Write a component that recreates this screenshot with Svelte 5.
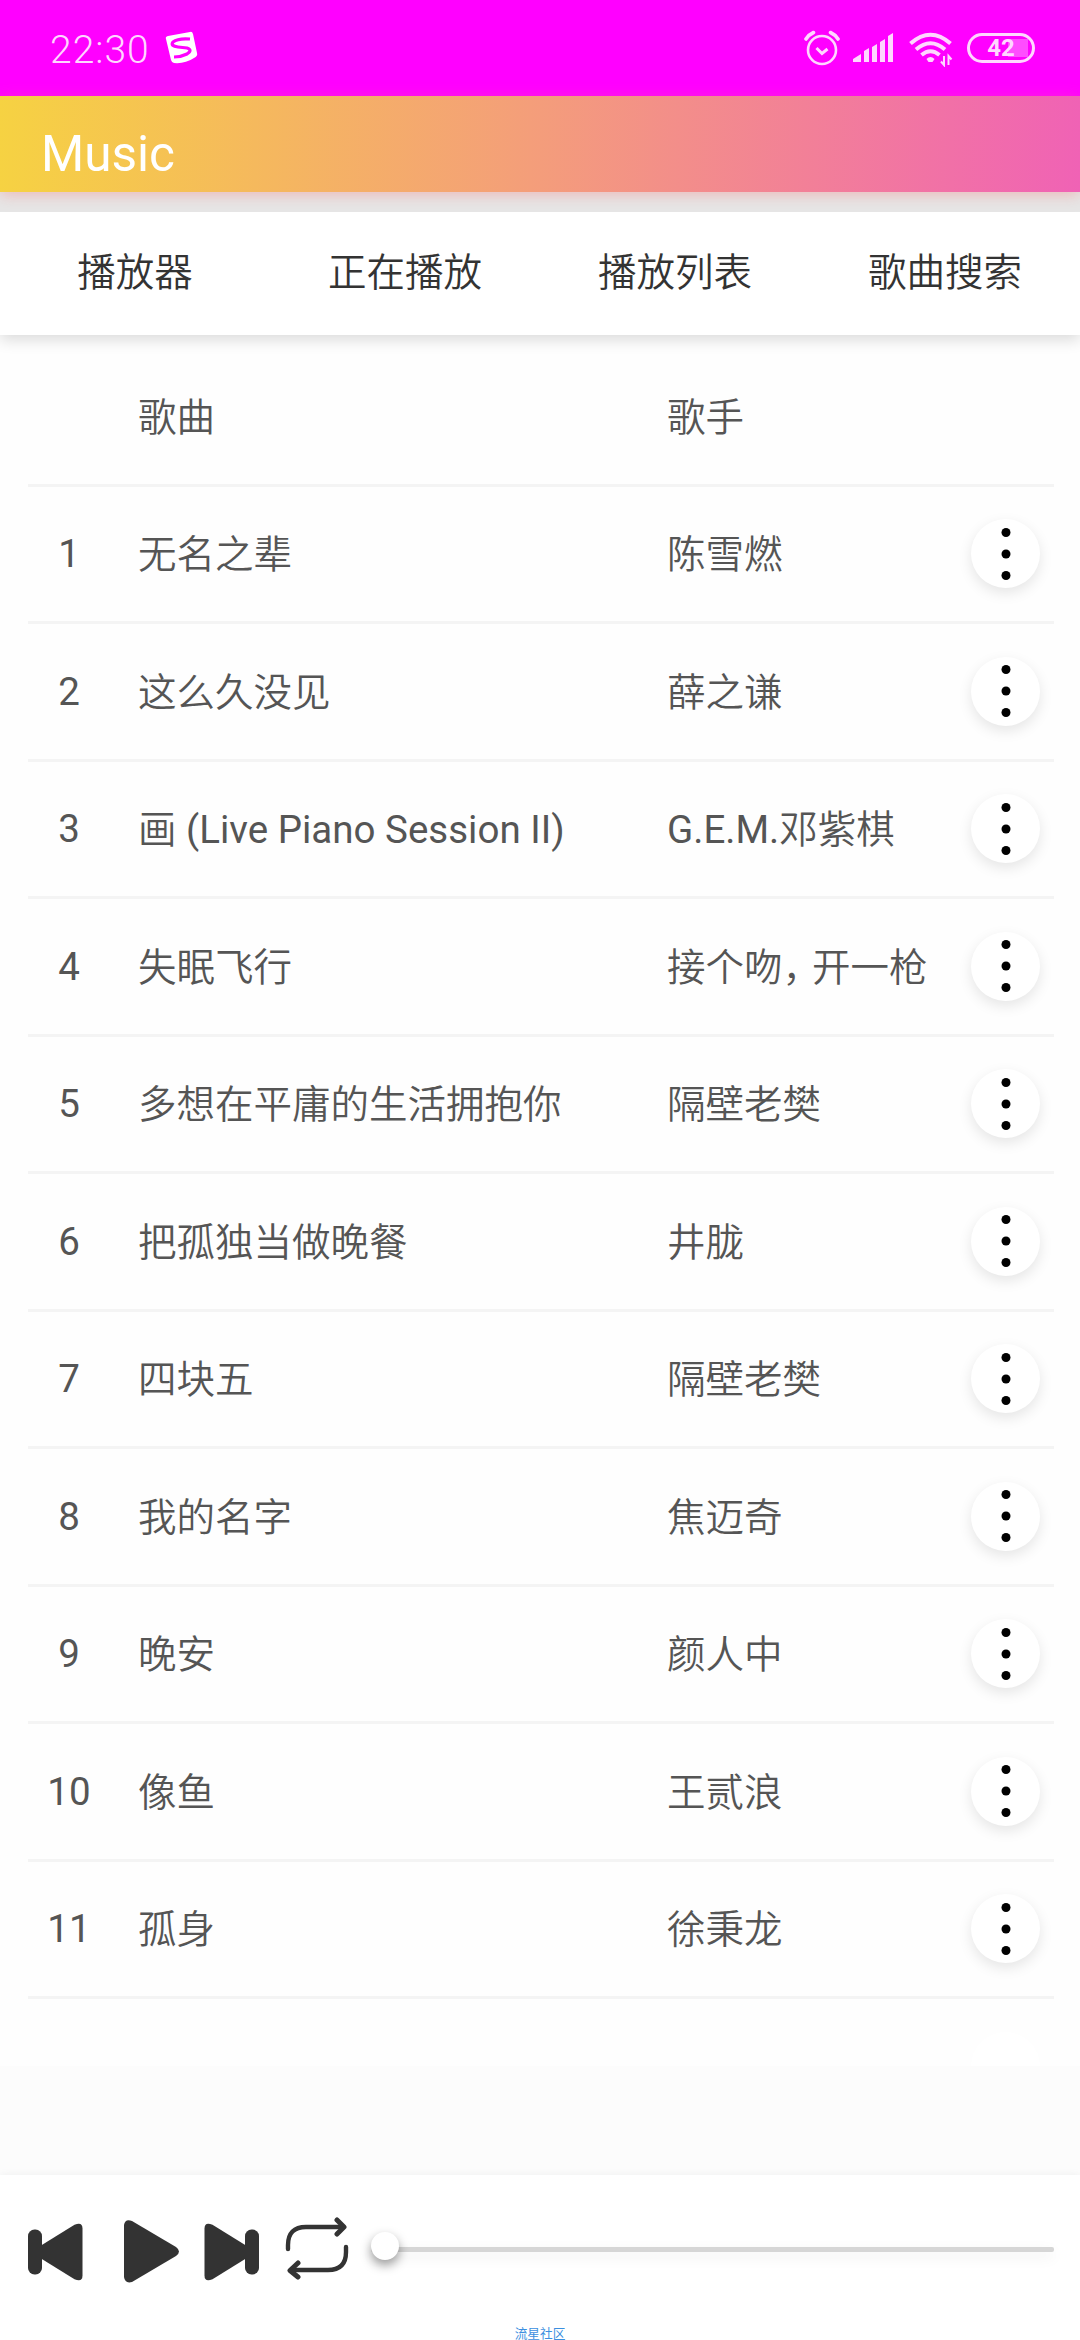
<script>
	const tabs = ['播放器', '正在播放', '播放列表', '歌曲搜索'];

	const songs = [
		{ name: '无名之辈', singer: '陈雪燃' },
		{ name: '这么久没见', singer: '薛之谦' },
		{ name: '画 (Live Piano Session II)', singer: 'G.E.M.邓紫棋' },
		{ name: '失眠飞行', singer: '接个吻，开一枪' },
		{ name: '多想在平庸的生活拥抱你', singer: '隔壁老樊' },
		{ name: '把孤独当做晚餐', singer: '井胧' },
		{ name: '四块五', singer: '隔壁老樊' },
		{ name: '我的名字', singer: '焦迈奇' },
		{ name: '晚安', singer: '颜人中' },
		{ name: '像鱼', singer: '王贰浪' },
		{ name: '孤身', singer: '徐秉龙' }
	];

	// latin runs keep the regular weight, the rest is set lighter
	const runs = (text) => text.match(/[\x20-\x7e]+|，|[^\x20-\x7e，]+/g);
</script>

{#snippet label(text)}
	{#each runs(text) as run}<span class:latin={/^[\x20-\x7e]/.test(run)} class:comma={run === '，'}>{run}</span>{/each}
{/snippet}

<div class="app">
	<div class="status">
		<span class="time">22:30</span>
		<svg class="ime" width="34" height="34" viewBox="0 0 34 34">
			<path d="M1 8Q0 6 3 5L25 1Q27 0 28 3L32 22Q33 25 29 27Q20 33 9 32Q7 32 6 29Z" fill="#fff" />
			<path
				d="M25 8Q13 7 8 11Q5 15 13 16L22 17Q28 19 22 23Q16 26 9 26"
				fill="none"
				stroke="#f0f"
				stroke-width="3.2"
			/>
		</svg>
		<div class="icons">
			<svg width="36" height="36" viewBox="0 0 36 36" fill="none" stroke="#ffd6ff" stroke-linecap="round">
				<circle cx="18" cy="20" r="14" stroke-width="2.6" />
				<path d="M12.5 18l5.5 5.5 5.5-4.5" stroke-width="3" stroke-linecap="butt" />
				<path d="M2 9Q5 4.5 9.5 2.5M26.5 2.5Q31 4.5 34 9" stroke-width="3.6" />
			</svg>
			<svg class="signal" width="40" height="30" viewBox="0 0 40 30" fill="#ffd6ff">
				<path d="M0 29v-3l8-5v8zM11 29V18l5-3v14zM19 29V14l5-3v18zM27 29V9l5-3v23zM35 29V3l5-3v29z" />
			</svg>
			<svg class="wifi" width="44" height="36" viewBox="0 0 44 36" fill="none" stroke="#ffd6ff" stroke-width="4">
				<path d="M1.5 12.5Q21.5-5 41.5 12.5M7 18.5Q21.5 6 36 18.5M12.5 24Q21.5 16.5 30.5 24" />
				<path d="M17.5 28Q21.5 24 25.5 28L23.5 31H19.5Z" fill="#ffd6ff" stroke="none" />
				<path d="M35 25v9l-3-3.5M39.5 34v-9l3 3.5" stroke-width="2" />
			</svg>
			<div class="battery">42</div>
		</div>
	</div>

	<header>Music</header>

	<nav>
		{#each tabs as tab}
			<a href="#{tab}">{tab}</a>
		{/each}
	</nav>

	<main>
		<div class="row head">
			<span class="num"></span>
			<span class="name">歌曲</span>
			<span class="singer">歌手</span>
		</div>
		{#each songs as song, i}
			<div class="row">
				<span class="num">{i + 1}</span>
				<span class="name">{@render label(song.name)}</span>
				<span class="singer">{@render label(song.singer)}</span>
				<button aria-label="more">
					<svg width="10" height="54" viewBox="0 0 10 54">
						<circle cx="5" cy="5.5" r="4.5" />
						<circle cx="5" cy="27" r="4.5" />
						<circle cx="5" cy="48.5" r="4.5" />
					</svg>
				</button>
			</div>
		{/each}
		<div class="row next">
			<button aria-label="more"></button>
		</div>
	</main>

	<footer>
		<div class="player">
			<svg class="prev" width="55" height="58" viewBox="0 0 55 58" fill="#333">
				<rect x="0" y="6.5" width="14" height="45" rx="6.5" />
				<path d="M13 22.5L46.5 1.8Q54.5-1.5 54.5 5.5V52.5Q54.5 59.5 46.5 56.2L13 35.5Z" />
			</svg>
			<svg class="play" width="55" height="63" viewBox="0 0 55 63" fill="#333">
				<path d="M0 5Q1-1.5 8 1L52 27Q58 31.5 52 36L8 62Q1 64 0 57Z" />
			</svg>
			<svg class="skip" width="55" height="58" viewBox="0 0 55 58" fill="#333">
				<rect x="41" y="6.5" width="14" height="45" rx="6.5" />
				<path d="M42 22.5L8.5 1.8Q.5-1.5.5 5.5V52.5Q.5 59.5 8.5 56.2L42 35.5Z" />
			</svg>
			<svg class="loop" width="64" height="64" viewBox="0 0 64 64" fill="none" stroke="#333" stroke-width="4.4" stroke-linecap="round">
				<path d="M3 32V28Q3 10 21 10H58M61 30V35Q61 53 43 53H6" />
				<path d="M52 3L59 10L52 17M13 46L5 53.5L13 60" stroke-width="5" stroke-linejoin="round" />
			</svg>
			<div class="slider"><i></i></div>
		</div>
		<div class="mark">流星社区</div>
	</footer>
</div>

<style>
	:global(body) {
		background: #fff;
	}

	.app {
		display: flex;
		flex-direction: column;
		width: 1080px;
		height: 2340px;
		overflow: hidden;
		background: #fcfcfc;
		color: #555;
		font-family: Roboto, 'Noto Sans CJK SC', sans-serif;
		font-size: 38.5px;
	}

	.status {
		display: flex;
		align-items: center;
		height: 96px;
		flex: none;
		box-sizing: border-box;
		padding: 0 45px 0 50px;
		background: #f0f;
		color: #ffd6ff;
	}

	.time {
		width: 115px;
		padding-top: 4px;
		font-weight: 350;
		font-size: 39px;
		letter-spacing: 1px;
	}

	.icons {
		display: flex;
		align-items: center;
		margin-left: auto;
	}

	.signal {
		margin-left: 13px;
	}

	.wifi {
		margin: 2px 14px 0 16px;
	}

	.battery {
		width: 68px;
		height: 30px;
		box-sizing: border-box;
		border: 3px solid #ffd6ff;
		border-radius: 15px;
		background: linear-gradient(to right, #ff4dff, #ff4dff) 38px 3px / 20px 18px no-repeat;
		font-weight: 700;
		font-size: 24px;
		line-height: 25px;
		text-align: center;
	}

	header {
		position: relative;
		z-index: 2;
		height: 96px;
		flex: none;
		box-sizing: border-box;
		padding: 29px 41px 0;
		background: linear-gradient(to right, #f6d242, #f49d7b 50%, #f062b5);
		box-shadow: 0 3px 14px rgba(244, 120, 120, 0.4);
		color: #fff;
		font-size: 49.5px;
		line-height: 58px;
	}

	nav {
		display: flex;
		flex: none;
		height: 123px;
		border-top: 20px solid #e6e6e6;
		background: #fff;
		box-shadow: 0 5px 14px rgba(0, 0, 0, 0.14);
		z-index: 1;
	}

	nav a {
		flex: 1;
		color: #333;
		font-weight: 350;
		line-height: 122px;
		text-align: center;
		text-decoration: none;
	}

	main {
		height: 1731px;
		flex: none;
		overflow: hidden;
		padding: 14px 26px 0 28px;
		box-sizing: border-box;
		background: #fefefe;
	}

	.row {
		display: flex;
		align-items: center;
		height: 137.5px;
		box-sizing: border-box;
		border-bottom: 3px solid #f4f4f4;
		line-height: 45px;
	}

	.num {
		width: 82px;
		text-align: center;
	}

	.name {
		width: 557px;
		padding-left: 28px;
		box-sizing: border-box;
	}

	.name,
	.singer {
		padding-top: 2px;
		font-weight: 350;
		white-space: nowrap;
	}

	.latin {
		font-weight: 400;
		white-space: pre;
	}

	.comma {
		letter-spacing: -9px;
	}

	button {
		display: flex;
		align-items: center;
		justify-content: center;
		width: 69px;
		height: 69px;
		margin-left: auto;
		margin-right: 14px;
		padding: 0;
		border: 0;
		border-radius: 50%;
		background: #fff;
		box-shadow: 0 5px 14px rgba(0, 0, 0, 0.1);
	}

	.next button {
		box-shadow: none;
	}

	footer {
		display: flex;
		flex-direction: column;
		justify-content: space-between;
		height: 165px;
		margin-top: auto;
		background: #fff;
		box-shadow: 0 0 8px rgba(0, 0, 0, 0.06);
	}

	.player {
		display: flex;
		align-items: center;
		padding: 45px 26px 0 28px;
	}

	.play {
		margin-left: 41px;
	}

	.skip {
		margin-left: 25px;
	}

	.loop {
		margin: -5px 22px 0 26px;
	}

	.slider {
		flex: 1;
		height: 5px;
		margin-top: -4px;
		border-radius: 2px;
		background: #d6d6d6;
		box-shadow: 0 5px 14px rgba(0, 0, 0, 0.08);
	}

	.slider i {
		display: block;
		width: 28px;
		height: 28px;
		margin-top: -15px;
		border-radius: 50%;
		background: #fff;
		box-shadow: 0 5px 11px rgba(0, 0, 0, 0.4);
	}

	.mark {
		color: #3b8fe0;
		font-size: 12.7px;
		line-height: 12px;
		text-align: center;
	}
</style>
